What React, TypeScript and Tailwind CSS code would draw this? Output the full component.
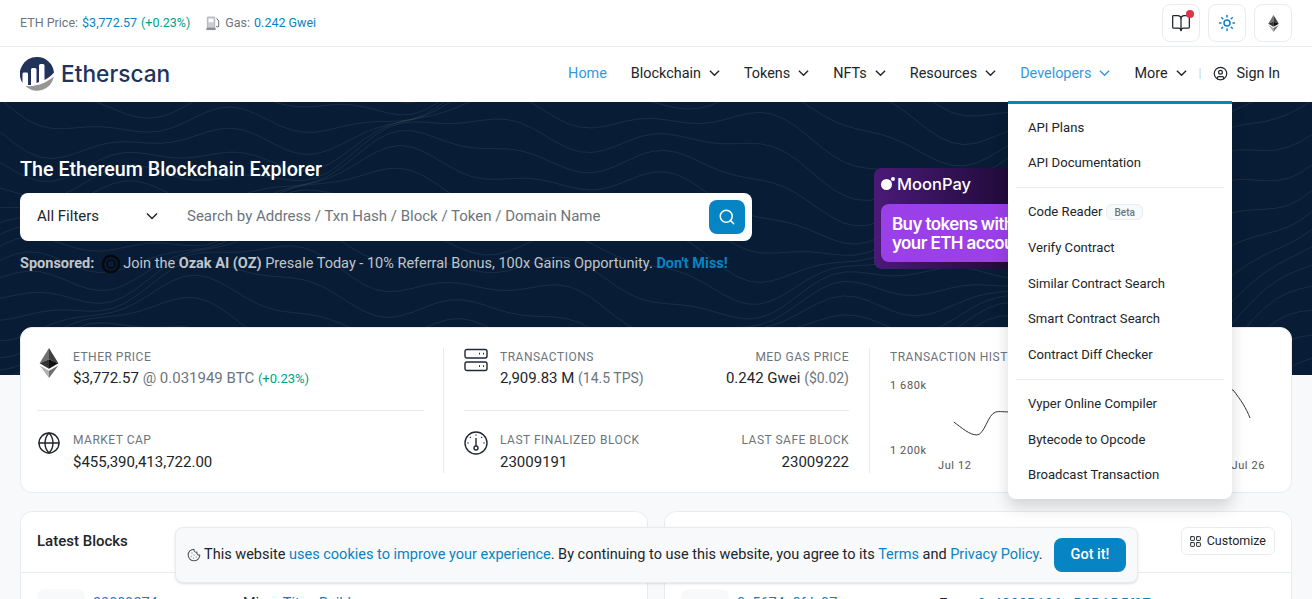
import { Sun, BookOpen, CircleUser, Globe, LayoutGrid, Cookie, Search } from 'lucide-react';

const navItems = [
  { label: 'Blockchain' },
  { label: 'Tokens' },
  { label: 'NFTs' },
  { label: 'Resources' },
  { label: 'Developers', active: true },
  { label: 'More' },
];

const menuGroups = [
  ['API Plans', 'API Documentation'],
  ['Code Reader', 'Verify Contract', 'Similar Contract Search', 'Smart Contract Search', 'Contract Diff Checker'],
  ['Vyper Online Compiler', 'Bytecode to Opcode', 'Broadcast Transaction'],
];

// topographic lines behind the hero, wavy rows that drift with height
function contourLine(y0: number) {
  const pts: string[] = [];
  for (let x = -20; x <= 1340; x += 12) {
    const y =
      y0 +
      30 * Math.sin(x / 135 + y0 / 70) +
      16 * Math.sin(x / 47 + y0 / 33) +
      7 * Math.sin(x / 21 - y0 / 50) -
      (x > 1150 ? (x - 1150) * 0.7 : 0);
    pts.push(`${x} ${y.toFixed(1)}`);
  }
  return 'M' + pts.join(' L');
}

const contours: string[] = [];
for (let y0 = -40; y0 < 440; y0 += 19) contours.push(contourLine(y0));

function Chevron({ className }: { className: string }) {
  return (
    <svg viewBox="0 0 12 8" fill="none" stroke="currentColor" strokeWidth="1.5" className={className}>
      <path d="M1 1.5 L6 6.5 L11 1.5" />
    </svg>
  );
}

function EthIcon({ className }: { className: string }) {
  return (
    <svg viewBox="0 0 20 32" className={className}>
      <path d="M10 0 L0 16.3 L10 12 Z" fill="#6f6f6f" />
      <path d="M10 0 L20 16.3 L10 12 Z" fill="#3f3f3f" />
      <path d="M0 16.3 L10 12 V22 Z" fill="#333333" />
      <path d="M20 16.3 L10 12 V22 Z" fill="#111111" />
      <path d="M0 18.6 L10 32 V24.3 Z" fill="#b0b0b0" />
      <path d="M20 18.6 L10 32 V24.3 Z" fill="#6f6f6f" />
    </svg>
  );
}

function Logo() {
  return (
    <svg viewBox="0 0 34 34" className="w-[34px] h-[34px]">
      <path d="M17 0 A17 17 0 0 0 2.5 26 L2.5 17 Q2.5 15.6 4 15.6 L6.8 15.6 Q8 15.6 8 17 V28 L11 28 V12.5 Q11 11 12.5 11 H15 Q16.5 11 16.5 12.5 V26 L19 25 V8.5 Q19 7 20.5 7 H23 Q24.5 7 24.5 8.5 V23 C 28 21, 31.5 18.5, 34 15.5 A17 17 0 0 0 17 0 Z" fill="#21325b" />
      <path d="M33.8 19.5 C 28 25, 17 30, 5.5 29 A17 17 0 0 0 33.8 19.5 Z" fill="#979695" />
    </svg>
  );
}

function GasIcon() {
  return (
    <svg viewBox="0 0 16 16" className="w-[14px] h-[15px]">
      <path d="M1.5 1.5 Q1.5 0.5 2.5 0.5 H9 Q10 0.5 10 1.5 V13 H1.5 Z" fill="#c9ccd1" stroke="#8b8f96" strokeWidth="0.6" />
      <rect x="3" y="2.5" width="5.5" height="4" fill="#fff" />
      <rect x="0.5" y="13" width="10.5" height="2.5" fill="#8b8f96" />
      <path d="M12 2 L14.5 5 V11 Q14.5 12.5 13 12 L11.5 11" fill="none" stroke="#4b5563" strokeWidth="1" />
    </svg>
  );
}

function OzakIcon() {
  return (
    <svg viewBox="0 0 20 20" className="w-[20px] h-[20px] mr-[2px]" fill="none" stroke="#05080d" strokeWidth="2.6" strokeLinecap="round">
      <path d="M10 2 C 15 2, 18 5.5, 18 9" />
      <path d="M18 10.5 C 17.5 15, 14 18, 10.5 18" />
      <path d="M9 18 C 5 18, 2 14.5, 2 11" />
      <path d="M2 9.5 C 2.5 5, 6 2, 9 2" />
      <circle cx="10" cy="10" r="4" strokeWidth="1.6" />
    </svg>
  );
}

function ServerIcon() {
  return (
    <svg viewBox="0 0 24 24" fill="none" stroke="#1f2937" strokeWidth="1.4" className="w-[24px] h-[24px]">
      <rect x="1" y="1.5" width="22" height="8.5" rx="2" />
      <rect x="1" y="14" width="22" height="8.5" rx="2" />
      <path d="M15 5.7 H16 M19 5.7 H20 M15 18.2 H16 M19 18.2 H20" strokeWidth="1.8" />
    </svg>
  );
}

function GaugeIcon() {
  return (
    <svg viewBox="0 0 24 24" fill="none" stroke="#1f2937" strokeWidth="1.4" className="w-[24px] h-[24px]">
      <circle cx="12" cy="12" r="11" />
      <circle cx="12" cy="17" r="2" />
      <path d="M12 15 V7 M12 3.5 V4.5 M6 6 L6.8 6.8 M18 6 L17.2 6.8 M3.5 12 H4.5 M19.5 12 H20.5" />
    </svg>
  );
}

function Stat({ label, children, right, top }: { label: string; children: React.ReactNode; right?: boolean; top?: boolean }) {
  return (
    <div className={right ? 'text-right' : ''}>
      <div className="text-[12px] leading-[18px] tracking-[0.5px] text-[#6c757d] uppercase">{label}</div>
      <div className={`text-[15px] leading-[22px] text-[#212529] whitespace-nowrap ${top ? 'mt-px' : 'mt-[2px]'}`}>{children}</div>
    </div>
  );
}

export default function App() {
  return (
    <div className="relative h-[599px] overflow-hidden bg-[#f8f9fa] font-['Roboto',sans-serif] text-[#212529]">
      {/* top bar */}
      <div className="h-[47px] bg-white border-b border-[#e9ecef] flex items-center justify-between px-5">
        <div className="flex items-center text-[12.5px] text-[#6c757d]">
          <span>ETH Price:</span>
          <a className="ml-1 text-[#0784c3]">$3,772.57</a>
          <span className="ml-1 text-[#00a186]">(+0.23%)</span>
          <span className="ml-[16px] mr-[5px]"><GasIcon /></span>
          <span>Gas:</span>
          <a className="ml-1 text-[#0784c3]">0.242 Gwei</a>
        </div>
        <div className="flex gap-2">
          <div className="relative w-[38px] h-[38px] rounded-lg border border-[#e9ecef] flex items-center justify-center">
            <BookOpen className="w-5 h-5 text-[#212529]" strokeWidth={1.5} />
            <span className="absolute top-[5px] right-[5px] w-2 h-2 rounded-full bg-[#dc3545]" />
          </div>
          <div className="w-[38px] h-[38px] rounded-lg border border-[#e9ecef] flex items-center justify-center">
            <Sun className="w-[18px] h-[18px] text-[#0784c3]" strokeWidth={2} />
          </div>
          <div className="w-[38px] h-[38px] rounded-lg border border-[#e9ecef] flex items-center justify-center">
            <EthIcon className="w-[11px] h-[17px]" />
          </div>
        </div>
      </div>

      {/* nav */}
      <div className="h-[55px] bg-white flex items-center justify-between pl-5 pr-8 pb-[2px]">
        <div className="flex items-center gap-[7px] pt-[2px]">
          <Logo />
          <span className="font-['Inter',sans-serif] font-medium text-[22.7px] text-[#21325b]">Etherscan</span>
        </div>
        <div className="flex items-center gap-6 text-[14.4px]">
          <a className="text-[#3598dc]">Home</a>
          {navItems.map((item) => (
            <a key={item.label} className={`flex items-center gap-2 ${item.active ? 'text-[#3598dc]' : 'text-[#212529]'}`}>
              {item.label}
              <Chevron className="w-[11px] h-[8px]" />
            </a>
          ))}
          <div className="flex items-center gap-3 -ml-[12px]">
            <span className="text-[#c4d3e6] text-[12px]">|</span>
            <a className="flex items-center gap-2">
              <CircleUser className="w-[15px] h-[15px]" strokeWidth={2} />
              Sign In
            </a>
          </div>
        </div>
      </div>

      {/* hero */}
      <div className="relative h-[273px] bg-[#081d35] px-5 pt-[54px] overflow-hidden">
        <svg viewBox="0 0 1312 273" className="absolute inset-0 w-full h-full" fill="none" stroke="#ffffff" strokeOpacity="0.07">
          {contours.map((d) => (
            <path key={d} d={d} />
          ))}
        </svg>
        <div className="relative flex">
          <div className="w-[732px]">
            <h1 className="text-[19.7px] leading-[28px] font-medium text-white">The Ethereum Blockchain Explorer</h1>
            <div className="mt-[9px] h-12 bg-white rounded-lg flex items-center pl-[17px] pr-[7px]">
              <div className="w-[121px] flex items-center justify-between text-[15px] pb-[2px]">
                All Filters
                <Chevron className="w-[12px] h-[8px]" />
              </div>
              <div className="flex-1 ml-[29px] pb-[2px] text-[15px] text-[#6c757d]">Search by Address / Txn Hash / Block / Token / Domain Name</div>
              <div className="w-9 h-[34px] rounded-lg bg-[#0784c3] flex items-center justify-center">
                <Search className="w-[18px] h-[18px] text-white" strokeWidth={2} />
              </div>
            </div>
            <div className="mt-[13px] flex items-center text-[14.5px] leading-5 text-[#c0c5cc] whitespace-nowrap">
              <span className="font-bold mr-[7px]">Sponsored:</span>
              <OzakIcon />
              <span>Join the <b>Ozak AI (OZ)</b> Presale Today - 10% Referral Bonus, 100x Gains Opportunity. <b className="text-[#0784c3]">Don't Miss!</b></span>
            </div>
          </div>
          <div className="ml-[122px] mt-[12px] w-[320px] h-[101px] rounded-lg bg-gradient-to-r from-[#4a1a78] via-[#1a0830] to-black px-[7px] pt-[6px] overflow-hidden">
            <div className="flex items-center gap-[5px] text-white font-['Inter',sans-serif] font-medium text-[16.5px] leading-[20px]">
              <span className="relative w-[11px] h-[11px] rounded-full bg-white mt-[1px]">
                <span className="absolute -top-[2px] -right-[3px] w-1 h-1 rounded-full bg-white" />
              </span>
              MoonPay
            </div>
            <div className="mt-[10px] h-[58px] rounded-lg bg-[#9b3fe8] pl-[11px] pt-[11px] font-['Inter',sans-serif] font-semibold text-[17px] leading-[19px] tracking-[-0.6px] text-white whitespace-nowrap">
              Buy tokens with<br />your ETH account
            </div>
          </div>
        </div>
      </div>

      {/* stats card */}
      <div className="relative -mt-[48px] mx-5 h-[166px] bg-white rounded-xl border border-[#e9ecef] flex pl-4 pt-5">
        <div className="w-[407px] h-[125px] pr-[19px] border-r border-[#e9ecef]">
          <div className="flex gap-[14px] h-[62px]">
            <EthIcon className="w-[20px] h-[30px] ml-[2px] shrink-0" />
            <Stat label="Ether Price" top>
              $3,772.57 <span className="text-[#6c757d]">@ 0.031949 BTC</span> <span className="text-[13px] text-[#00a186]">(+0.23%)</span>
            </Stat>
          </div>
          <div className="border-t border-[#e9ecef] pt-[20px] flex gap-3">
            <Globe className="w-6 h-6 shrink-0" strokeWidth={1.4} />
            <Stat label="Market Cap">$455,390,413,722.00</Stat>
          </div>
        </div>
        <div className="w-[426px] h-[125px] px-5 border-r border-[#e9ecef]">
          <div className="flex justify-between h-[62px]">
            <div className="flex gap-3">
              <ServerIcon />
              <Stat label="Transactions" top>
                2,909.83 M <span className="text-[14px] text-[#6c757d]">(14.5 TPS)</span>
              </Stat>
            </div>
            <Stat label="Med Gas Price" right top>
              0.242 Gwei <span className="text-[14px] text-[#6c757d]">($0.02)</span>
            </Stat>
          </div>
          <div className="border-t border-[#e9ecef] pt-[20px] flex justify-between">
            <div className="flex gap-3">
              <GaugeIcon />
              <Stat label="Last Finalized Block">23009191</Stat>
            </div>
            <Stat label="Last Safe Block" right>23009222</Stat>
          </div>
        </div>
        <div className="flex-1 pl-5 pr-[26px]">
          <div className="text-[12px] leading-[18px] tracking-[0.5px] text-[#6c757d] uppercase">Transaction History</div>
          <div className="relative mt-[2px] h-[105px]">
            <div className="absolute top-[10px] left-0 text-[11px] tracking-[0.6px] text-[#555]">1 680k</div>
            <div className="absolute top-[75px] left-0 text-[11px] tracking-[0.6px] text-[#555]">1 200k</div>
            <div className="absolute top-[90px] left-[48px] text-[11px] tracking-[0.6px] text-[#555]">Jul 12</div>
            <div className="absolute top-[90px] right-0 text-[11px] tracking-[0.6px] text-[#555]">Jul 26</div>
            <svg viewBox="0 0 376 105" className="absolute inset-0 w-full h-full" fill="none" stroke="#333" strokeWidth="1">
              <path d="M64 54 C 72 60, 80 67, 87 67 C 95 67, 98 46, 106 44 C 110 43, 114 44, 122 44 L 180 40 C 240 30, 300 10, 344 22 C 352 32, 357 40, 361 50" />
            </svg>
          </div>
        </div>
      </div>

      {/* latest cards */}
      <div className="mt-[18px] mx-5 grid grid-cols-2 gap-4">
        <div className="h-[200px] bg-white rounded-xl border border-[#e9ecef]">
          <div className="h-[61px] flex items-center px-4 pb-[2px] border-b border-[#e9ecef] text-[15px] font-medium">Latest Blocks</div>
          <div className="flex px-4 pt-4">
            <div className="w-12 h-12 rounded-lg bg-[#f8f9fa]" />
            <div className="ml-2 pt-[5px] w-[150px] text-[14.4px] leading-[20px] text-[#0784c3]">23009274</div>
            <div className="pt-[5px] text-[14.4px] leading-[20px]">Miner <span className="text-[#0784c3]">Titan Builder</span></div>
          </div>
        </div>
        <div className="h-[200px] bg-white rounded-xl border border-[#e9ecef]">
          <div className="h-[61px] flex items-center justify-end px-4 border-b border-[#e9ecef]">
            <div className="h-[28px] -mt-[2px] pl-[7px] pr-2 flex items-center gap-[5px] rounded-md border border-[#e9ecef] text-[12.5px]">
              <LayoutGrid className="w-[13px] h-[13px]" strokeWidth={1.8} />
              Customize
            </div>
          </div>
          <div className="flex px-4 pt-4">
            <div className="w-12 h-12 rounded-lg bg-[#f8f9fa]" />
            <div className="ml-2 pt-[5px] w-[202px] text-[14.4px] leading-[20px] text-[#0784c3]">0x5674a8fde97</div>
            <div className="pt-[5px] text-[15px] leading-[20px]">From <span className="text-[#0784c3]">0x4838B106...B0BAD5f97</span></div>
          </div>
        </div>
      </div>

      {/* developers menu */}
      <div className="absolute left-[1008px] top-[101px] w-[224px] h-[398px] bg-white rounded-b-lg border-t-[3px] border-[#0784c3] shadow-[0_8px_16px_rgba(0,0,0,0.15)] px-2 pt-[6px] text-[13.1px] text-[#212529]">
        {menuGroups.map((group, i) => (
          <div key={i} className={i === 0 ? '' : i === 1 ? 'border-t border-[#e9ecef] mt-[6px] pt-[6px]' : 'border-t border-[#e9ecef] mt-[6px] pt-[7px]'}>
            {group.map((item) => (
              <div key={item} className={`px-3 flex items-center gap-[4px] ${item === 'Code Reader' ? 'h-[36.5px]' : 'h-[35.5px]'}`}>
                {item}
                {item === 'Code Reader' && (
                  <span className="h-4 px-[7px] flex items-center rounded-md border border-[#e9ecef] bg-[#f8f9fa] text-[10px] font-medium text-[#6c757d]">Beta</span>
                )}
              </div>
            ))}
          </div>
        ))}
      </div>

      {/* cookie notice */}
      <div className="absolute left-[175px] top-[527px] w-[963px] h-[56px] bg-[#f8f9fa] rounded-lg border border-[#e9ecef] shadow-sm flex items-center justify-between pl-[11px] pr-[11px] text-[14.5px]">
        <div className="flex items-center gap-[3px]">
          <Cookie className="w-[14px] h-[14px] text-[#555]" strokeWidth={1.8} />
          <span>
            This website <a className="text-[#0784c3]">uses cookies to improve your experience</a>. By continuing to use this website, you agree to its <a className="text-[#0784c3]">Terms</a> and <a className="text-[#0784c3]">Privacy Policy</a>.
          </span>
        </div>
        <div className="w-[72px] h-[34px] rounded-lg bg-[#0784c3] text-white font-medium flex items-center justify-center text-[14.5px] whitespace-nowrap">Got it!</div>
      </div>
    </div>
  );
}
